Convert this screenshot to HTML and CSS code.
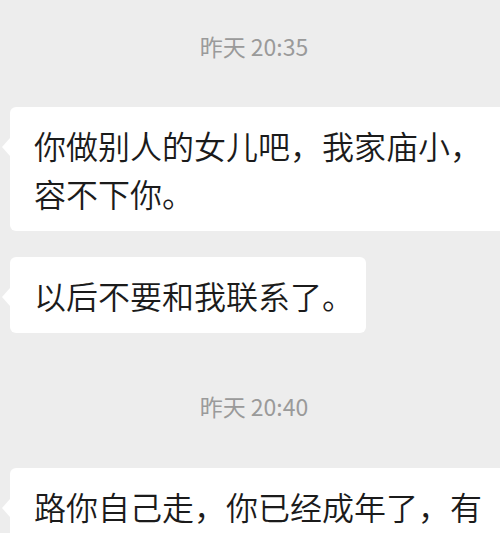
FILE: index.html
```html
<!DOCTYPE html>
<html lang="zh-CN">
<head>
    <meta charset="UTF-8">
    <meta name="viewport" content="width=device-width, initial-scale=1.0">
    <title>聊天记录</title>
    <link rel="stylesheet" href="styles.css">
</head>
<body>

<div class="chat">
    <div class="time">昨天 20:35</div>
    <div class="msg msg-wide">你做别人的女儿吧，我家庙小，容不下你。</div>
    <div class="msg">以后不要和我联系了。</div>

    <div class="time time-gap">昨天 20:40</div>
    <div class="msg msg-wide">路你自己走，你已经成年了，有</div>
</div>

</body>
</html>
```

FILE: styles.css
```css
html, body {
    margin: 0;
    padding: 0;
}

body {
    background-color: #ededed;
    font-family: "Noto Sans CJK SC", "Noto Sans", sans-serif;
    overflow: hidden;
    height: 533px;
}

.chat {
    display: flex;
    flex-direction: column;
    align-items: flex-start;
    padding-top: 31px;
}

.time {
    align-self: center;
    font-size: 23px;
    line-height: 30px;
    color: #9a9a9a;
    margin-bottom: 46px;
    margin-left: 8px;
}

.time-gap {
    margin-top: 32px;
    margin-bottom: 47px;
}

.msg {
    position: relative;
    margin-left: 10px;
    margin-bottom: 26px;
    padding: 14px 12px 14px 24px;
    background-color: #ffffff;
    border-radius: 6px;
    font-size: 32px;
    font-weight: 350;
    line-height: 48px;
    color: #1b1b1b;
}

.msg-wide {
    width: 462px;
    flex-shrink: 0;
}

/* bubble tail */
.msg::before {
    content: "";
    position: absolute;
    left: -8px;
    top: 31px;
    border-top: 9px solid transparent;
    border-bottom: 9px solid transparent;
    border-right: 8px solid #ffffff;
}
```
